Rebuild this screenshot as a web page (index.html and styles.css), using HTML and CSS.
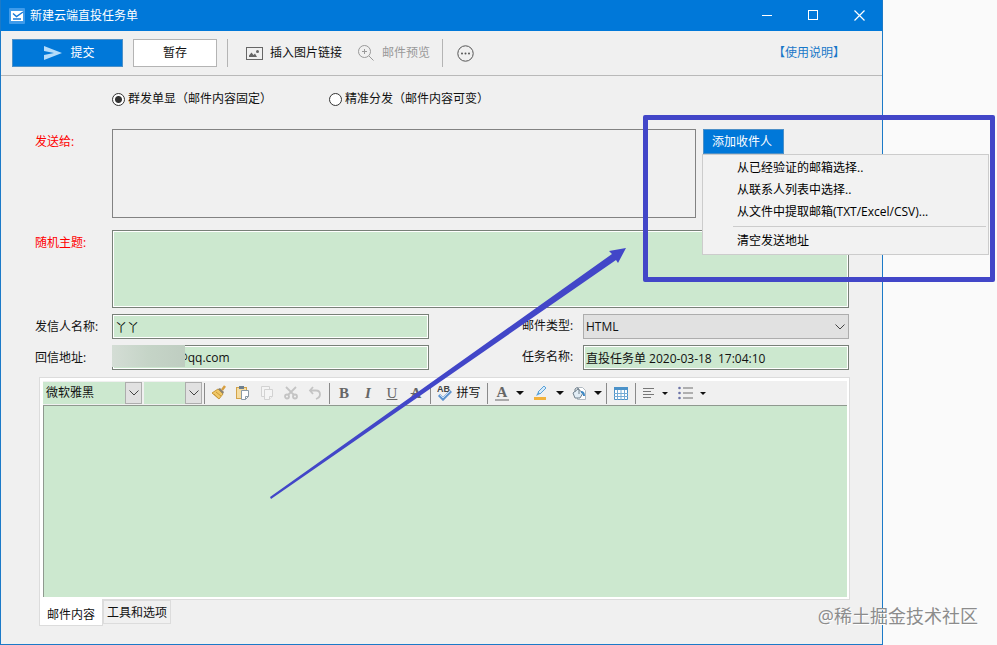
FILE: index.html
```
<!DOCTYPE html>
<html lang="zh-CN">
<head>
  <meta charset="UTF-8">
  <meta name="viewport" content="width=device-width, initial-scale=1">
  <title>新建云端直投任务单</title>
  <link rel="stylesheet" href="styles.css">
</head>
<body>
  <div class="window">
    <header class="titlebar">
      <svg class="app-icon" width="16" height="16" viewBox="0 0 16 16">
        <rect width="16" height="16" rx="1" fill="#3f9bea"/>
        <path d="M2 3h12v10H2z" fill="#fff"/>
        <path d="M4 5.5L7.500 8.500L14 4M4 11h8" fill="none" stroke="#1479d8" stroke-width="1.400"/>
      </svg>
      <h1>新建云端直投任务单</h1>
      <button class="win-btn" aria-label="最小化"><svg width="11" height="11"><path d="M0 5.5h10" stroke="#fff"/></svg></button>
      <button class="win-btn" aria-label="最大化"><svg width="11" height="11"><rect x=".5" y=".5" width="9" height="9" fill="none" stroke="#fff"/></svg></button>
      <button class="win-btn" aria-label="关闭"><svg width="11" height="11"><path d="M.5 .5l10 10M10.5 .5l-10 10" stroke="#fff" stroke-width="1.2"/></svg></button>
    </header>

    <div class="toolbar">
      <button class="btn submit">
        <svg width="18" height="14" viewBox="0 0 18 14"><path d="M0 0L18 7L0 14V9L10 7L0 5Z" fill="#b5dcfa"/></svg>
        提交
      </button>
      <button class="btn save">暂存</button>
      <span class="sep"></span>
      <button class="tool">
        <svg width="17" height="13" viewBox="0 0 17 13"><rect x=".5" y=".5" width="16" height="12" fill="none" stroke="#666"/><path d="M3 10V8.5L5.5 5.5L7.5 8L9 6.5L11 10Z" fill="#666"/><circle cx="11.5" cy="4.5" r="1.5" fill="#666"/></svg>
        插入图片链接
      </button>
      <button class="tool preview" disabled>
        <svg width="16" height="16" viewBox="0 0 16 16" fill="none" stroke="#999"><circle cx="6.5" cy="6.5" r="6"/><path d="M11 11l4.5 4.5M6.5 4v5M4 6.5h5"/></svg>
        邮件预览
      </button>
      <span class="sep"></span>
      <button class="tool more" aria-label="更多">
        <svg width="17" height="17" viewBox="0 0 17 17"><circle cx="8.5" cy="8.5" r="7.7" fill="none" stroke="#555"/><g fill="#555"><circle cx="5" cy="8.5" r="1"/><circle cx="8.5" cy="8.5" r="1"/><circle cx="12" cy="8.5" r="1"/></g></svg>
      </button>
      <a class="help" href="#">【使用说明】</a>
    </div>

    <main class="content">
      <div class="modes">
        <label><input type="radio" name="mode" checked>群发单显（邮件内容固定）</label>
        <label><input type="radio" name="mode">精准分发（邮件内容可变）</label>
      </div>

      <div class="row send-row">
        <label class="required" for="to">发送给:</label>
        <textarea id="to"></textarea>
        <div class="recipients">
          <button class="add">添加收件人</button>
          <ul class="menu">
            <li><button>从已经验证的邮箱选择..</button></li>
            <li><button>从联系人列表中选择..</button></li>
            <li><button>从文件中提取邮箱(TXT/Excel/CSV)...</button></li>
            <li class="last"><button>清空发送地址</button></li>
          </ul>
          <div class="mark-box"></div>
          <svg class="mark-arrow" width="358" height="256" viewBox="0 0 358 256"><path d="M0 253L342 10L339 7L356 4L348 19L346 16L1 255Z"/></svg>
        </div>
      </div>

      <div class="row subject-row">
        <label class="required" for="subject">随机主题:</label>
        <textarea id="subject" class="green"></textarea>
      </div>

      <div class="row pair">
        <label for="sender">发信人名称:</label>
        <input id="sender" class="green" type="text" value="丫丫">
        <label class="second" for="type">邮件类型:</label>
        <span class="picker">
          <select id="type"><option>HTML</option></select>
          <svg width="10" height="6"><path d="M.5 .5l4.5 4.5l4.5-4.5" fill="none" stroke="#444"/></svg>
        </span>
      </div>

      <div class="row pair">
        <label for="reply">回信地址:</label>
        <span class="masked">
          <input id="reply" class="green" type="text" value="@qq.com">
          <span class="mask"></span>
        </span>
        <label class="second" for="task">任务名称:</label>
        <input id="task" class="green" type="text" value="直投任务单 2020-03-18  17:04:10">
      </div>

      <section class="editor">
        <div class="format">
          <span class="picker font">
            <select aria-label="字体"><option>微软雅黑</option></select>
            <span class="drop"><svg width="10" height="6"><path d="M.5 .5l4.5 4.5l4.5-4.5" fill="none" stroke="#444"/></svg></span>
          </span>
          <span class="picker size">
            <select aria-label="字号"><option></option></select>
            <span class="drop"><svg width="10" height="6"><path d="M.5 .5l4.5 4.5l4.5-4.5" fill="none" stroke="#444"/></svg></span>
          </span>
          <i class="bar"></i>
          <button aria-label="格式刷"><svg width="16" height="16" viewBox="0 0 16 16"><path d="M1 8L7 4L12 9L8 14Z" fill="#f0c766" stroke="#c99a3a"/><path d="M3 9l4 4M5 7l5 4" stroke="#c99a3a"/><path d="M7 4l2-1l4 4l-1 2Z" fill="#8b8374"/><path d="M11 5l3-4" stroke="#d79f42" stroke-width="2.5"/></svg></button>
          <button aria-label="粘贴"><svg width="16" height="16" viewBox="0 0 16 16"><rect x="1.5" y="2.5" width="10" height="11" fill="#f5dda3" stroke="#d3a34a"/><rect x="4" y="1" width="5" height="3" fill="#6c7f90"/><path d="M6.5 5.5h7v6l-3 3h-4z" fill="#fff" stroke="#8b9aa6"/><path d="M13.5 11.5h-3v3" fill="none" stroke="#8b9aa6"/></svg></button>
          <button aria-label="复制"><svg width="16" height="16" viewBox="0 0 16 16" fill="#f4f4f4" stroke="#d2d2d2"><path d="M2.5 1.5h8v10h-8z"/><path d="M5.5 4.5h8v7l-3 3h-5z"/><path d="M13.5 11.5h-3v3"/></svg></button>
          <button aria-label="剪切"><svg width="16" height="16" viewBox="0 0 16 16" fill="none" stroke="#c4c4c4" stroke-width="1.8"><path d="M3 2l8 8M13 2l-8 8"/><circle cx="4" cy="11.5" r="2"/><circle cx="12" cy="11.5" r="2"/></svg></button>
          <button aria-label="撤销"><svg width="16" height="16" viewBox="0 0 16 16" fill="none" stroke="#c4c4c4" stroke-width="1.8"><path d="M6 2L3 5.5L6 9M3 5.5h6q4 0 4 4q0 3-4 4.5"/></svg></button>
          <i class="bar"></i>
          <button class="glyph"><b>B</b></button>
          <button class="glyph"><em>I</em></button>
          <button class="glyph"><u>U</u></button>
          <button class="glyph"><s>A</s></button>
          <i class="bar"></i>
          <button class="spell"><svg width="15" height="16" viewBox="0 0 15 16"><text x="0" y="7">AB</text><path d="M2 10l4 4l8-8" fill="none" stroke="#5c93cf" stroke-width="3"/><path d="M3 10l3 3l7-7" fill="none" stroke="#c5dcf3"/></svg>拼写</button>
          <i class="bar"></i>
          <button class="with-caret glyph" aria-label="文字颜色"><span class="color-a">A</span><span class="caret"></span></button>
          <button class="with-caret" aria-label="突出显示"><svg width="16" height="16" viewBox="0 0 16 16"><path d="M5 7l6-6l2 2l-6 6z" fill="#d6eafa" stroke="#5ba3d9"/><path d="M5 7l-2 4l4-2z" fill="#5ba3d9"/><rect x="1" y="12" width="12" height="3" fill="#f2b23c"/></svg><span class="caret"></span></button>
          <button class="with-caret" aria-label="填充"><svg width="16" height="16" viewBox="0 0 16 16"><path d="M6.5 2.5h5l3 3v9h-8z" fill="#fff" stroke="#b1bac2"/><path d="M2 8l5-4l5 4l-3 5h-5z" fill="#e2edf5" stroke="#71818e"/><path d="M4 7V4q2-3 4 0v5" fill="none" stroke="#71818e"/><path d="M10 7q3 0 3 4" fill="none" stroke="#3f8ac6" stroke-width="2"/></svg><span class="caret"></span></button>
          <i class="bar"></i>
          <button aria-label="表格"><svg width="14" height="13" viewBox="0 0 14 13"><path d="M.5 .5h13v12h-13z" fill="#fff" stroke="#4b92c9"/><path d="M0 0h14v3H0z" fill="#4b92c9"/><path d="M0 6.5h14M0 9.5h14M3.5 3v10M7 3v10M10.5 3v10" stroke="#75abd5"/></svg></button>
          <i class="bar"></i>
          <button class="with-caret small" aria-label="对齐"><svg width="12" height="10" viewBox="0 0 12 10"><path d="M0 .5h11M0 3.5h8M0 6.5h11M0 9.5h8" stroke="#777"/></svg><span class="caret"></span></button>
          <button class="with-caret small" aria-label="列表"><svg width="15" height="14" viewBox="0 0 15 14"><g fill="#6d74a8"><circle cx="1.5" cy="2" r="1.3"/><circle cx="1.5" cy="7" r="1.3"/><circle cx="1.5" cy="12" r="1.3"/></g><path d="M5 2h10M5 7h10M5 12h10" stroke="#999" stroke-width="1.5"/></svg><span class="caret"></span></button>
        </div>
        <textarea class="body" aria-label="邮件内容"></textarea>
      </section>
      <nav class="tabs">
        <button class="active">邮件内容</button>
        <button>工具和选项</button>
      </nav>
    </main>
  </div>
  <div class="watermark">@稀土掘金技术社区</div>
</body>
</html>
```
FILE: styles.css
```
* {
  box-sizing: border-box;
}
body {
  margin: 0;
  padding-right: 114px;
  background: #fafafa;
  color: #111;
  font: 12px/16px "Open Sans", "Noto Sans CJK SC", sans-serif;
}
button, input, select, textarea {
  font: inherit;
  color: inherit;
  margin: 0;
  border-radius: 0;
}
button {
  padding: 0;
  border: 0;
  background: none;
  white-space: nowrap;
}
svg {
  flex: none;
}
.window {
  display: flex;
  flex-direction: column;
  min-height: 100vh;
  border: 1px solid #1b7ac8;
  border-top: 0;
  background: #f0f0f0;
}

/* 标题栏 */
.titlebar {
  display: flex;
  align-items: center;
  height: 31px;
  padding-left: 8px;
  background: #0078d9;
  color: #fff;
}
.titlebar h1 {
  flex: 1;
  margin: 0 0 0 5px;
  font-size: 12px;
  font-weight: normal;
}
.win-btn {
  display: flex;
  align-items: center;
  justify-content: center;
  width: 46px;
  height: 31px;
}

/* 工具栏 */
.toolbar {
  display: flex;
  align-items: center;
  height: 45px;
  padding: 0 37px 0 11px;
  border-bottom: 1px solid #b9b9b9;
}
.btn {
  display: flex;
  align-items: center;
  justify-content: center;
  gap: 8px;
  height: 28px;
  border: 1px solid #b4b4b4;
}
.submit {
  width: 111px;
  margin-right: 10px;
  padding-left: 4px;
  background: #0078d9;
  border-color: #4c90c8;
  color: #fff;
}
.save {
  width: 84px;
  margin-right: 10px;
  background: #fff;
}
.sep {
  width: 1px;
  height: 28px;
  background: #b4b4b4;
}
.tool {
  display: flex;
  align-items: center;
  gap: 7px;
  margin-left: 18px;
}
.preview {
  gap: 8px;
  margin: 0 12px 0 16px;
  color: #999;
}
.more {
  margin-left: 14px;
}
.help {
  margin-left: auto;
  color: #1878c8;
  text-decoration: none;
}

/* 表单 */
.content {
  flex: 1;
  display: flex;
  flex-direction: column;
  padding: 15px 33px 18px 34px;
}
.modes {
  display: flex;
  gap: 57px;
  padding-left: 77px;
  margin-bottom: 22px;
}
.modes label {
  display: flex;
  align-items: center;
  gap: 3px;
}
.modes input {
  appearance: none;
  width: 13px;
  height: 13px;
  border: 1px solid #333;
  border-radius: 50%;
  background: #fff;
}
.modes input:checked {
  background: radial-gradient(circle, #333 3px, #fff 4px);
}
.row {
  display: flex;
  margin-bottom: 6px;
}
.pair {
  display: grid;
  grid-template-columns: 77px minmax(0, 317fr) 154px minmax(0, 266fr);
}
.row label {
  flex: none;
  width: 77px;
  padding-top: 5px;
}
.row .required {
  color: #f00;
}
.row .second {
  width: auto;
  padding: 4px 0 0 93px;
}
.row textarea {
  flex: 1;
  min-width: 0;
  padding: 2px;
  border: 1px solid #828282;
  background: transparent;
  resize: none;
}
.send-row {
  height: 89px;
  margin-bottom: 12px;
}
.subject-row {
  height: 78px;
}
.row input, .row select {
  width: 100%;
  min-width: 0;
  height: 25px;
  padding: 0 2px;
}
.row .green {
  border: 1px solid #788078;
  background: #cce8cf;
  box-shadow: inset 0 0 0 1px #fff;
}
.picker {
  display: grid;
  align-items: center;
}
.picker > * {
  grid-area: 1 / 1;
}
.picker > svg, .drop {
  justify-self: end;
  pointer-events: none;
}
.picker > svg {
  margin-right: 4px;
}
.picker select {
  appearance: none;
  border: 1px solid #adadad;
  background: #e1e1e1;
}
.masked {
  position: relative;
}
.masked .green {
  padding-left: 64px;
}
.mask {
  position: absolute;
  left: 0;
  top: 0;
  width: 73px;
  height: 22px;
  background: linear-gradient(90deg, #d4ddd5, #c5d4c7 50%, #bfcdc1);
}

/* 收件人菜单 */
.recipients {
  position: relative;
  width: 146px;
  margin-left: 7px;
}
.add {
  width: 81px;
  height: 25px;
  padding-right: 3px;
  border: 1px solid #4c90c8;
  background: #0078d9;
  color: #fff;
}
.menu {
  position: absolute;
  left: -1px;
  top: 25px;
  z-index: 2;
  width: 287px;
  margin: 0;
  padding: 2px 2px 2px 30px;
  border: 1px solid #ccc;
  background: #f2f2f2;
  color: #000;
  list-style: none;
}
.menu button {
  display: block;
  width: 100%;
  height: 22px;
  padding-left: 4px;
  text-align: left;
}
.menu .last {
  margin-top: 3px;
  padding-top: 3px;
  border-top: 1px solid #ccc;
}
.mark-box {
  position: absolute;
  left: -60px;
  top: -14px;
  z-index: 3;
  width: 352px;
  height: 167px;
  border: 5px solid #4246c8;
  border-radius: 2px;
  pointer-events: none;
}
.mark-arrow {
  position: absolute;
  left: -433px;
  top: 115px;
  z-index: 3;
  fill: #4246c8;
  pointer-events: none;
}

/* 编辑器 */
.editor {
  flex: 1;
  display: flex;
  flex-direction: column;
  margin: 1px -1px 0 4px;
  padding: 3px 2px 2px 3px;
  border: 1px solid #dcdcdc;
  background: #fff;
}
.format {
  display: flex;
  align-items: center;
  height: 24px;
  background: #f0f0f0;
}
.format button {
  display: flex;
  align-items: center;
  justify-content: center;
  width: 24px;
  height: 22px;
}
.format select {
  width: 100%;
  height: 22px;
  padding: 0 3px;
  border: 0;
  background: #cce8cf;
}
.font {
  width: 99px;
  margin-right: 2px;
}
.size {
  width: 58px;
}
.drop {
  display: flex;
  align-items: center;
  justify-content: center;
  width: 17px;
  height: 22px;
  border: 1px solid #adadad;
  background: #e1e1e1;
}
.bar {
  width: 1px;
  height: 21px;
  margin: 0 2px;
  background: #8a8a8a;
}
.format .glyph {
  color: #666;
  font: 15px/18px "Liberation Serif", serif;
}
.glyph em, .glyph s, .color-a {
  font-weight: bold;
}
.format .spell {
  gap: 4px;
  width: 52px;
}
.spell text {
  font: bold 9px "Liberation Sans", sans-serif;
  fill: #444;
}
.format .with-caret {
  justify-content: flex-start;
  gap: 7px;
  width: 38px;
  padding-left: 5px;
}
.format .small {
  width: 35px;
}
.color-a {
  width: 14px;
  border-bottom: 2px solid #aaa;
  line-height: 14px;
}
.caret {
  border: 4px solid transparent;
  border-top-color: #111;
  border-bottom: 0;
}
.small .caret {
  border-width: 3px 3px 0;
}
.body {
  flex: 1;
  min-height: 100px;
  border: 1px solid #8f998f;
  border-width: 1px 0 0 1px;
  background: #cce8cf;
  resize: none;
}
.tabs {
  display: flex;
  align-items: flex-start;
  margin-left: 4px;
}
.tabs button {
  height: 24px;
  padding: 2px 3px 0;
  border: 1px solid #dcdcdc;
}
.tabs .active {
  height: 27px;
  margin-top: -1px;
  padding: 5px 7px 0;
  border-top: 0;
  background: #fff;
}

.watermark {
  position: absolute;
  right: 19px;
  bottom: 17px;
  color: #8c8c8c;
  font-size: 18px;
  line-height: 24px;
  text-shadow: 1px 1px 0 #fff;
}
```
